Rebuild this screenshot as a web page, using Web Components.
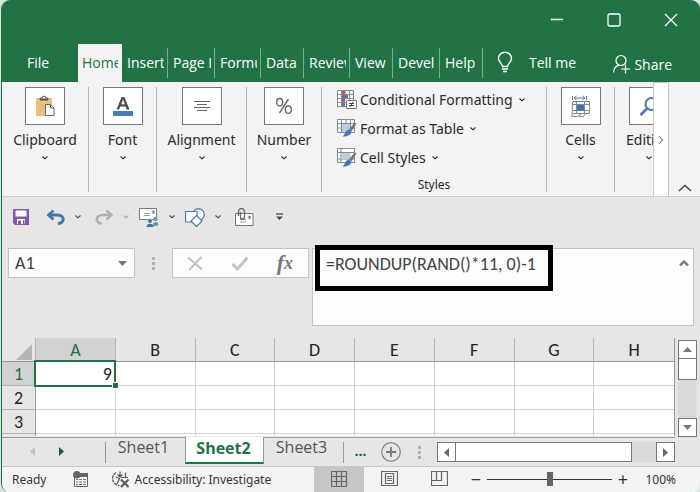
<!DOCTYPE html>
<html lang="en">
<head>
<meta charset="utf-8">
<title>Workbook</title>
<style>
  html, body { height: 100%; }
  body { margin: 0; background: #d5e6dd; font-family: "Open Sans", "Noto Sans", sans-serif; font-size: 14px; color: #2b2b2b; }
</style>
</head>
<body>
<xl-window>
  <xl-title-bar></xl-title-bar>
  <xl-tab-strip>
    <xl-tab style="--w:76px" plain>File</xl-tab>
    <xl-tab style="--w:44px" active>Home</xl-tab>
    <xl-tab style="--w:46px">Insert</xl-tab>
    <xl-tab style="--w:47px">Page L</xl-tab>
    <xl-tab style="--w:46px">Formu</xl-tab>
    <xl-tab style="--w:43px">Data</xl-tab>
    <xl-tab style="--w:46px">Review</xl-tab>
    <xl-tab style="--w:43px">View</xl-tab>
    <xl-tab style="--w:47px">Devel</xl-tab>
    <xl-tab style="--w:43px">Help</xl-tab>
  </xl-tab-strip>
  <xl-ribbon>
    <xl-group label="Clipboard" icon="paste" style="--w:87px"></xl-group>
    <xl-group label="Font" icon="font" style="--w:68px"></xl-group>
    <xl-group label="Alignment" icon="align" style="--w:90px"></xl-group>
    <xl-group label="Number" icon="percent" style="--w:75px"></xl-group>
    <xl-styles-group></xl-styles-group>
    <xl-group label="Cells" icon="cells" style="--w:68px"></xl-group>
    <xl-group label="Editing" icon="find" style="--w:38px" last></xl-group>
  </xl-ribbon>
  <xl-quick-bar></xl-quick-bar>
  <xl-formula-bar></xl-formula-bar>
  <xl-sheet></xl-sheet>
  <xl-sheet-bar></xl-sheet-bar>
  <xl-status-bar></xl-status-bar>
</xl-window>

<script>
const RESET = `
  :host, *, *::before, *::after { box-sizing: border-box; }
  button { font: inherit; color: inherit; background: none; border: 0; padding: 0; margin: 0; display: flex; align-items: center; justify-content: center; }
  svg { display: block; }
`;

const ICONS = {
  min: [14, 14, '<path d="M1 6.5h12" stroke="#fff" stroke-width="1.3"/>'],
  max: [14, 14, '<rect x="1" y="1" width="12" height="12" rx="1.5" fill="none" stroke="#fff" stroke-width="1.3"/>'],
  close: [14, 14, '<path d="M1 1l12 12M13 1L1 13" stroke="#fff" stroke-width="1.3"/>'],
  bulb: [16, 22, '<path d="M5.5 15.500c0-3-4-4-4-8.300a6.500 6 0 0 1 13 0c0 4.300-4 5.300-4 8.300z" fill="none" stroke="#fff" stroke-width="1.400"/><path d="M5 18h6M6 20.500h4" stroke="#fff" stroke-width="1.400"/>'],
  share: [20, 20, '<circle cx="9" cy="6.500" r="5" fill="none" stroke="#fff" stroke-width="1.200"/><path d="M1.500 18.500c.3-4 2.500-6.500 5.500-7.300M13.500 10.500v9M9 15h9" fill="none" stroke="#fff" stroke-width="1.200"/>'],
  chev: [8, 6, '<path d="M1.500 1.500l2.500 2.300 2.500-2.300" fill="none" stroke="currentColor" stroke-width="1.100"/>'],
  chevRight: [6, 10, '<path d="M1 1l3.500 4L1 9" fill="none" stroke="#777" stroke-width="1.100"/>'],
  chevUp: [14, 8, '<path d="M1 7l6-5.500L13 7" fill="none" stroke="#444" stroke-width="1.400"/>'],
  paste: [20, 22, '<path d="M1 3h16v18H1z" fill="#e8bf7c"/><path d="M5 4.500V3h2.200a1.800 1.800 0 0 1 3.600 0H13v1.500z" fill="#fff" stroke="#555" stroke-width="1"/><path d="M5 3.500h8v2H5z" fill="#555"/><path d="M10.500 9.500h5l3.500 3.500v7.500h-8.500z" fill="#fff" stroke="#666"/><path d="M15.500 9.500V13H19" fill="none" stroke="#666"/>'],
  font: [20, 20, '<path d="M3.500 13.500L8.600 1h2.800l5.100 12.500h-2.800l-1.200-3H7.300l-1.200 3zM8.200 8.200h3.600L10 3.500z" fill="#505050"/><path d="M0 15h20v5H0z" fill="#4a7ab5"/>'],
  align: [18, 12, '<path d="M1 1.500h16M4 4.500h10M1 7.500h16M4 10.500h10" stroke="#666"/>'],
  percent: [18, 18, '<g fill="none" stroke="#666" stroke-width="1.400"><ellipse cx="4.700" cy="5.200" rx="3" ry="3.700"/><ellipse cx="13.300" cy="12.700" rx="3" ry="3.700"/><path d="M13.500 2L4.500 16"/></g>'],
  cells: [20, 22, '<path d="M1.500 1v4M15.500 1v4M3 3h11M5.500 1L3 3l2.500 2M11.500 1L14 3l-2.500 2" fill="none" stroke="#4a7ab5"/><path d="M1.500 6.500h17v12h-4l-2 3h-4l1.500-3-3 3h-6zM5.500 6.500v12M13.500 6.500v12M1.500 9.500h17M1.500 15.500h17M1.500 18.500h13" fill="none" stroke="#888"/><path d="M6 10h7v5.500H6z" fill="#3f72af"/>'],
  find: [20, 20, '<circle cx="12.500" cy="8" r="6" fill="none" stroke="#4a7ab5" stroke-width="2"/><path d="M8 12.500L1.500 19" stroke="#4a7ab5" stroke-width="2.600"/>'],
  cond: [20, 20, '<path d="M.500.500h16v16H.500zM4.500.500v16M12.500.500v16M.500 4.500h16M.500 8.500h16M.500 12.500h16" fill="#fff" stroke="#888"/><path d="M5 1h3.500v3H5zM5 9h3v3H5z" fill="#c8543b"/><path d="M5 5h6v3H5zM5 13h3v3H5z" fill="#4a7ab5"/><path d="M9.500 10.500h10v8h-10z" fill="#fff" stroke="#777"/><path d="M12 13.500h5M12 15.500h5M16 12l-3 5" stroke="#444"/>'],
  fmtTable: [20, 19, '<path d="M.500.500h17v13H.500zM4.500.500v13M9 .500v13M13.500.500v13M.500 4.500h17M.500 9h17" fill="#fff" stroke="#888"/><path d="M5 5h8v8H5z" fill="#b9cfe4"/><path d="M17.500 3.500l2 1-5 8-2.500-2z" fill="#777"/><path d="M11.500 10.500l3 2.300c-.5 3.500-4.500 5-9 4.700 2.500-1.300 2.500-6 6-7z" fill="#3f78bd"/>'],
  cellStyles: [20, 19, '<path d="M.500.500h17v14H.500zM4 .500v14M.500 4.500h17M.500 11h17" fill="#fff" stroke="#888"/><path d="M4.500 5h9v6h-9z" fill="#b9cfe4"/><path d="M17.500 4.500l2 1-5 8-2.500-2z" fill="#777"/><path d="M11.500 11.500l3 2.300c-.5 3.500-4.500 5-9 4.700 2.500-1.300 2.500-6 6-7z" fill="#3f78bd"/>'],
  save: [16, 16, '<path d="M0 0h16v16H2l-2-2z" fill="#7f5aa6"/><path d="M2.500 1.500h11v6h-11zM4 10h8v5H4z" fill="#fff"/><path d="M5 11.500h3V15H5zM10 11h1.500v4H10z" fill="#7f5aa6"/>'],
  undo: [18, 15, '<path d="M6.500.500L1.500 5l5 4.500" fill="none" stroke="#4377ab" stroke-width="2.600"/><path d="M2 5h8.500c7.500 0 7.500 8.500.5 8.500" fill="none" stroke="#4377ab" stroke-width="3"/>'],
  redo: [18, 15, '<path d="M11.500.500l5 4.500-5 4.500" fill="none" stroke="#b0b0b0" stroke-width="2.400"/><path d="M16 5H7.500C0 5 0 13.500 7 13.500" fill="none" stroke="#b0b0b0" stroke-width="2.700"/>'],
  mail: [20, 19, '<path d="M.500.500h17v11H.500z" fill="#fff" stroke="#777"/><path d="M5 5.500h6M5 7.500h6" stroke="#999"/><path d="M13.500 2.500h2v3h-2z" fill="#4a7ab5"/><circle cx="16.500" cy="11" r="2.200" fill="#69a38b"/><path d="M13.500 18c0-5 6-5 6-1l-2 1z" fill="#69a38b"/><circle cx="11" cy="13" r="2.300" fill="#3f72af" stroke="#e6e6e6" stroke-width=".6"/><path d="M7.500 19c0-4.500 7-4.500 7 0z" fill="#3f72af"/>'],
  shapes: [20, 19, '<g fill="#fff" stroke="#4a7ab5" stroke-width="1.200"><circle cx="13.500" cy="6.500" r="5.800"/><path d="M.600 3.500h11.500v10.500H.600z"/><path d="M11.500 7.500l5.500 5.500-5.500 5.500L6 13z"/></g>'],
  attach: [19, 18, '<path d="M.500 5.500h17.500v12H.500z" fill="#fff" stroke="#777"/><path d="M13.500 8h2v3h-2z" fill="#4a7ab5"/><path d="M5 11.500h6M5 14h6" stroke="#999"/><path d="M3.500 8V3.500a3 3 0 0 1 6 0V9a2 2 0 0 1-4 0V4" fill="none" stroke="#666" stroke-width="1.300"/>'],
  customize: [7, 8, '<path d="M0 1h7" stroke="#444" stroke-width="1.200"/><path d="M0 3.500h7L3.500 7z" fill="#444"/>'],
  cross: [16, 15, '<path d="M1 1.500l14 12M14.500 1L2 14" stroke="#c0c0c0" stroke-width="2"/>'],
  check: [18, 15, '<path d="M1.500 8l5 5L16.500 1.500" fill="none" stroke="#c4c4c4" stroke-width="3"/>'],
  down: [9, 5, '<path d="M0 0h9L4.500 5z" fill="#777"/>'],
  up: [9, 5, '<path d="M0 5h9L4.500 0z" fill="#777"/>'],
  left: [5, 9, '<path d="M5 0v9L0 4.500z" fill="currentColor"/>'],
  right: [5, 9, '<path d="M0 0v9l5-4.500z" fill="currentColor"/>'],
  caretUp: [10, 6, '<path d="M1 5.500l4-4 4 4" fill="none" stroke="#777" stroke-width="2.400"/>'],
  plusCircle: [20, 20, '<circle cx="10" cy="10" r="9.300" fill="none" stroke="#888" stroke-width="1.300"/><path d="M10 5v10M5 10h10" stroke="#777" stroke-width="1.800"/>'],
  macro: [15, 16, '<path d="M1.500 3.500h13v12h-13z" fill="#f3f3f3" stroke="#666"/><path d="M6 2h9v4H6z" fill="#666"/><path d="M3 8.500h2M6 8.500h3M10 8.500h3M3 11h2M6 11h3M10 11h3M3 13.500h2M6 13.500h3M10 13.500h3" stroke="#777"/><circle cx="3.800" cy="3.800" r="3.800" fill="#666"/>'],
  access: [19, 18, '<g fill="none" stroke="#555"><path d="M5 2.500a7 7 0 0 0 3.500 13" stroke-width="1.400" stroke-dasharray="3 1"/><path d="M5 7l3.500 1.500L6 14M9 1.500v5M6.500 4.500L9 7l2.500-2.500M14.500 2.500v5M10 7.500h7" stroke-width="1.200"/><path d="M10 9.500l7.500 7.500M17.500 9.500L10 17" stroke-width="2"/></g>'],
  viewGrid: [17, 17, '<path d="M.500.500h15v15H.500zM5.500.500v15M10.500.500v15M.500 5.500h15M.500 10.500h15" fill="none" stroke="#666" stroke-width="1.200"/>'],
  viewPage: [17, 16, '<path d="M.500.500h16v14H.500zM4.500 2.500h8v10h-8z" fill="none" stroke="#666" stroke-width="1.200"/><path d="M6 5.500h5M6 7.500h5M6 9.500h5" stroke="#666"/>'],
  viewBreak: [17, 16, '<path d="M.500.500h16v14H.500zM.500 9.500h10V.500M5.500.500v9" fill="none" stroke="#666" stroke-width="1.200"/>'],
  corner: [16, 16, '<path d="M16 0v16H0z" fill="#b5b5b5"/>'],
};

function define(name, html) {
  const make = typeof html === 'function' ? html : () => html;
  customElements.define(name, class extends HTMLElement {
    connectedCallback() {
      if (this.shadowRoot) return;
      this.attachShadow({ mode: 'open' }).innerHTML = `<style>${RESET}</style>` + make(this);
    }
  });
}

define('xl-icon', el => {
  const [w, h, body] = ICONS[el.getAttribute('name')];
  return `<style>:host { display: block; flex: none; }</style>
    <svg width="${w}" height="${h}" viewBox="0 0 ${w} ${h}" aria-hidden="true">${body}</svg>`;
});

define('xl-window', `
  <style>
    :host { display: flex; flex-direction: column; min-height: 100vh; margin-left: 1px; border-left: 1px solid #217346; background: #e6e6e6; border-radius: 9px 9px 10px 10px; overflow: hidden; }
  </style><slot></slot>`);

define('xl-title-bar', `
  <style>
    :host { display: flex; justify-content: flex-end; height: 44px; background: #217346; padding: 0 1px 4px 0; }
    button { width: 57px; }
  </style>
  <button aria-label="Minimize"><xl-icon name="min"></xl-icon></button>
  <button aria-label="Maximize"><xl-icon name="max"></xl-icon></button>
  <button aria-label="Close"><xl-icon name="close"></xl-icon></button>`);

define('xl-tab-strip', `
  <style>
    :host { display: flex; height: 38px; background: #217346; color: #fff; }
    .tell { margin-left: 14px; gap: 16px; padding-bottom: 2px; }
    .share { margin: 2px 28px 0 auto; gap: 2px; }
  </style>
  <slot></slot>
  <button class="tell"><xl-icon name="bulb"></xl-icon>Tell me</button>
  <button class="share"><xl-icon name="share"></xl-icon>Share</button>`);

define('xl-tab', `
  <style>
    :host { display: flex; width: var(--w); padding: 4px 0; }
    :host([active]) { background: #f3f3f3; color: #217346; }
    button { flex: 1; min-width: 0; padding: 0 3px 2px 5px; justify-content: flex-start; border-right: 1px solid #73b48f; }
    :host([active]) button { border-right-color: transparent; padding-left: 4px; }
    :host([plain]) button { justify-content: center; border: 0; padding: 0 8px 2px 4px; }
    span { overflow: hidden; white-space: nowrap; }
  </style>
  <button role="tab"><span><slot></slot></span></button>`);

define('xl-ribbon', `
  <style>
    :host { display: flex; height: 115px; background: #f3f3f3; border-bottom: 1px solid #cfcfcf; font-family: "Noto Sans", "Open Sans", sans-serif; }
    .groups { flex: 1; min-width: 0; display: flex; overflow: hidden; padding: 5px 0 4px; }
    .more { width: 16px; background: #fff; border: 1px solid #c6c6c6; border-bottom: 0; }
    .fold { width: 31px; align-items: flex-end; padding-bottom: 4px; }
  </style>
  <div class="groups"><slot></slot></div>
  <button class="more" aria-label="More groups"><xl-icon name="chevRight"></xl-icon></button>
  <button class="fold" aria-label="Collapse the ribbon"><xl-icon name="chevUp"></xl-icon></button>`);

define('xl-group', el => `
  <style>
    :host { display: flex; flex: none; width: var(--w); border-right: 1px solid #b5b5b5; }
    button { flex: 1; flex-direction: column; justify-content: flex-start; }
    :host([last]) { border: 0; overflow: hidden; }
    :host([last]) button { flex: 0 0 68px; }
    .box { width: 40px; height: 38px; display: grid; place-items: center; background: #fff; border: 1px solid #777; }
    .label { line-height: 20px; margin: 5px 0; }
  </style>
  <button><span class="box"><xl-icon name="${el.getAttribute('icon')}"></xl-icon></span>
  <span class="label">${el.getAttribute('label')}</span><xl-icon name="chev"></xl-icon></button>`);

define('xl-styles-group', `
  <style>
    :host { display: flex; flex-direction: column; flex: 1; min-width: 0; border-right: 1px solid #b5b5b5; padding-left: 15px; }
    button { flex: none; height: 29px; gap: 3px; align-self: flex-start; white-space: nowrap; padding-bottom: 4px; }
    [name="chev"] { margin-left: 2px; }
    .name { font-size: 12px; line-height: 16px; text-align: center; margin: 3px 15px 0 0; }
  </style>
  <button><xl-icon name="cond"></xl-icon>Conditional Formatting <xl-icon name="chev"></xl-icon></button>
  <button><xl-icon name="fmtTable"></xl-icon>Format as Table <xl-icon name="chev"></xl-icon></button>
  <button><xl-icon name="cellStyles"></xl-icon>Cell Styles <xl-icon name="chev"></xl-icon></button>
  <div class="name">Styles</div>`);

define('xl-quick-bar', `
  <style>
    :host { display: flex; align-items: center; height: 40px; padding-left: 11px; }
    button { height: 24px; }
    .drop { width: 8px; margin: 0 13px 0 9px; color: #444; }
    .drop.tight { margin-right: 9px; }
    .off { color: #aaa; }
    .save { margin-right: 18px; }
    .custom { margin-left: 22px; }
  </style>
  <button class="save" aria-label="Save"><xl-icon name="save"></xl-icon></button>
  <button aria-label="Undo"><xl-icon name="undo"></xl-icon></button>
  <button class="drop" aria-label="Undo list"><xl-icon name="chev"></xl-icon></button>
  <button aria-label="Redo"><xl-icon name="redo"></xl-icon></button>
  <button class="drop tight off" aria-label="Redo list"><xl-icon name="chev"></xl-icon></button>
  <button aria-label="Mail recipients"><xl-icon name="mail"></xl-icon></button>
  <button class="drop tight" aria-label="Mail options"><xl-icon name="chev"></xl-icon></button>
  <button aria-label="Shapes"><xl-icon name="shapes"></xl-icon></button>
  <button class="drop" aria-label="Shape options"><xl-icon name="chev"></xl-icon></button>
  <button aria-label="Send as attachment"><xl-icon name="attach"></xl-icon></button>
  <button class="custom" aria-label="Customize toolbar"><xl-icon name="customize"></xl-icon></button>`);

define('xl-formula-bar', `
  <style>
    :host { display: flex; align-items: flex-start; padding: 11px 6px 12px; font: 18px/20px Carlito, Lato, sans-serif; color: #444; }
    .box { display: flex; align-items: center; height: 30px; background: #fdfdfd; border: 1px solid #c3c3c3; }
    .name { width: 127px; padding: 0 7px 0 6px; }
    input, textarea { font: inherit; color: inherit; border: 0; padding: 0; background: none; outline: 0; min-width: 0; flex: 1; }
    .grip { width: 37px; height: 30px; display: grid; align-content: center; justify-content: center; gap: 2px; }
    .grip i { width: 3px; height: 3px; background: #b0b0b0; }
    .tools { width: 137px; justify-content: space-between; padding: 0 15px 0 14px; }
    .fx { font: italic 700 22px/26px "Liberation Serif", serif; color: #777; }
    .fx small { font-size: 18px; }
    .edit { position: relative; flex: 1; display: flex; align-items: flex-start; margin-left: 3px; height: 78px; background: #fdfdfd; border: 1px solid #c3c3c3; padding: 5px 4px 0 13px; }
    textarea { resize: none; height: 60px; overflow: hidden; }
    .mark { position: absolute; left: 2px; top: -4px; width: 238px; height: 46px; border: 5px solid #000; pointer-events: none; }
    .edit button { height: 18px; }
  </style>
  <div class="box name"><input aria-label="Name box" value="A1"><button aria-label="Names"><xl-icon name="down"></xl-icon></button></div>
  <div class="grip"><i></i><i></i><i></i></div>
  <div class="box tools">
    <button aria-label="Cancel"><xl-icon name="cross"></xl-icon></button>
    <button aria-label="Enter"><xl-icon name="check"></xl-icon></button>
    <button aria-label="Insert function" class="fx">f<small>x</small></button>
  </div>
  <div class="edit"><textarea aria-label="Formula" spellcheck="false">=ROUNDUP(RAND()*11, 0)-1</textarea>
    <button aria-label="Collapse formula bar"><xl-icon name="caretUp"></xl-icon></button>
    <div class="mark"></div></div>`);

const COLS = [...'ABCDEFGH'];
define('xl-sheet', `
  <style>
    :host { display: flex; font: 18px/20px Carlito, Lato, sans-serif; color: #222; }
    table { width: 100%; table-layout: fixed; border-collapse: separate; border-spacing: 0; }
    .grid { flex: 1; min-width: 0; height: 98px; overflow: hidden; border-right: 1px solid #999; }
    .first { width: 34px; }
    th, td { height: 24px; padding: 0; font-weight: 400; border-right: 1px solid #d0d0d0; border-bottom: 1px solid #d0d0d0; }
    th { background: #e6e6e6; border-color: #b5b5b5; }
    thead th { border-bottom-color: #999; }
    thead th:first-child xl-icon { float: right; margin: 4px 3px 0 0; }
    tbody th { border-right-color: #999; }
    td { background: #fff; text-align: right; padding-right: 3px; }
    tr > :last-child { border-right: 0; }
    .on { background: #d2d2d2; color: #217346; }
    .sel { position: relative; }
    .sel::before { content: ""; position: absolute; inset: -2px -1px -2px -2px; border: 2px solid #217346; }
    .sel::after { content: ""; position: absolute; right: -3px; bottom: -3px; width: 5px; height: 5px; background: #217346; outline: 1px solid #fff; }
    .scroll { width: 19px; margin: 2px 3px 0 3px; display: flex; flex-direction: column; background: #dadada; height: 97px; }
    .scroll button, .thumb { height: 19px; border: 1px solid #777; background: #fff; }
    .thumb { height: 22px; margin-top: -1px; }
    .scroll .end { margin-top: auto; }
  </style>
  <div class="grid"><table>
    <colgroup><col class="first">${COLS.map(() => '<col>').join('')}</colgroup>
    <thead><tr><th aria-label="Select all"><xl-icon name="corner"></xl-icon></th>${COLS.map((c, i) => `<th scope="col"${i ? '' : ' class="on"'}>${c}</th>`).join('')}</tr></thead>
    <tbody>${[1, 2, 3, ''].map(r => `<tr><th scope="row"${r === 1 ? ' class="on"' : ''}>${r}</th>${COLS.map((c, i) => r === 1 && !i ? '<td class="sel">9</td>' : '<td></td>').join('')}</tr>`).join('')}</tbody>
  </table></div>
  <div class="scroll">
    <button aria-label="Scroll up"><xl-icon name="up"></xl-icon></button><div class="thumb"></div>
    <button class="end" aria-label="Scroll down"><xl-icon name="down"></xl-icon></button>
  </div>`);

define('xl-sheet-bar', `
  <style>
    :host { display: flex; height: 30px; border-bottom: 1px solid #c6c6c6; color: #555; }
    .tabs { display: flex; border-top: 1px solid #999; flex: 1; }
    .nav { width: 29px; padding-bottom: 2px; }
    .prev { color: #c0c0c0; margin-left: 16px; }
    .next { color: #0c6136; margin-right: 29px; }
    .tab { width: 79px; padding: 0 4px 10px 0; font-size: 16px; }
    .sep { width: 1px; height: 21px; margin-top: 4px; background: #999; }
    .on { margin-top: -1px; height: 27px; background: #fff; color: #217346; font-weight: 700; border: 1px solid #999; border-top: 0; border-bottom: 2px solid #217346; padding: 0 2px 4px 0; }
    .dots { width: 37px; color: #0c6136; font-weight: 700; padding: 0 4px 4px 0; }
    .grip { width: 36px; display: grid; align-content: center; justify-content: center; gap: 2px; }
    .grip i { width: 3px; height: 3px; background: #b0b0b0; }
    .scroll { flex: 1; display: flex; height: 20px; margin-top: 4px; background: #dadada; color: #666; }
    .scroll button, .thumb { width: 19px; border: 1px solid #777; background: #fff; }
    .thumb { flex: 0 1 177px; margin-left: -1px; }
    .end { margin-left: auto; }
    .gap { width: 25px; }
  </style>
  <div class="tabs">
    <button class="nav prev" aria-label="Previous sheets"><xl-icon name="left"></xl-icon></button>
    <button class="nav next" aria-label="Next sheets"><xl-icon name="right"></xl-icon></button>
    <span class="sep"></span>
    <button class="tab">Sheet1</button>
    <button class="tab on">Sheet2</button>
    <button class="tab">Sheet3</button>
    <span class="sep"></span>
    <button class="dots" aria-label="More sheets">…</button>
    <button aria-label="New sheet"><xl-icon name="plusCircle"></xl-icon></button>
    <div class="grip"><i></i><i></i><i></i></div>
    <div class="scroll">
      <button aria-label="Scroll left"><xl-icon name="left"></xl-icon></button><div class="thumb"></div>
      <button class="end" aria-label="Scroll right"><xl-icon name="right"></xl-icon></button>
    </div>
  </div>
  <div class="gap"></div>`);

define('xl-status-bar', `
  <style>
    :host { display: flex; flex: 1; align-items: center; min-height: 26px; background: #f3f3f3; font: 12px "Noto Sans", "Open Sans", sans-serif; padding-left: 10px; white-space: nowrap; color: #333; }
    span, button, input { padding-bottom: 2px; }
    .macro { margin: 0 23px 0 27px; }
    .acc { gap: 4px; }
    .view { width: 50px; align-self: stretch; }
    .on { background: #c6c6c6; margin-left: auto; }
    .step { width: 17px; height: 20px; font-size: 18px; }
    .out { margin-left: 3px; }
    input { appearance: none; width: 125px; height: 16px; padding: 0; margin: 0 2px 2px 3px; background: linear-gradient(#333, #333) center / 100% 1px no-repeat; }
    input::-webkit-slider-thumb { appearance: none; width: 6px; height: 14px; background: #666; }
    .zoom { margin: 0 24px 0 14px; }
  </style>
  <span>Ready</span>
  <button class="macro" aria-label="Record macro"><xl-icon name="macro"></xl-icon></button>
  <button class="acc"><xl-icon name="access"></xl-icon>Accessibility: Investigate</button>
  <button class="view on" aria-label="Normal view"><xl-icon name="viewGrid"></xl-icon></button>
  <button class="view" aria-label="Page layout view"><xl-icon name="viewPage"></xl-icon></button>
  <button class="view" aria-label="Page break view"><xl-icon name="viewBreak"></xl-icon></button>
  <button class="step out" aria-label="Zoom out">−</button>
  <input type="range" aria-label="Zoom" min="0" max="100" value="50">
  <button class="step" aria-label="Zoom in">+</button>
  <button class="zoom">100%</button>`);
</script>
</body>
</html>
